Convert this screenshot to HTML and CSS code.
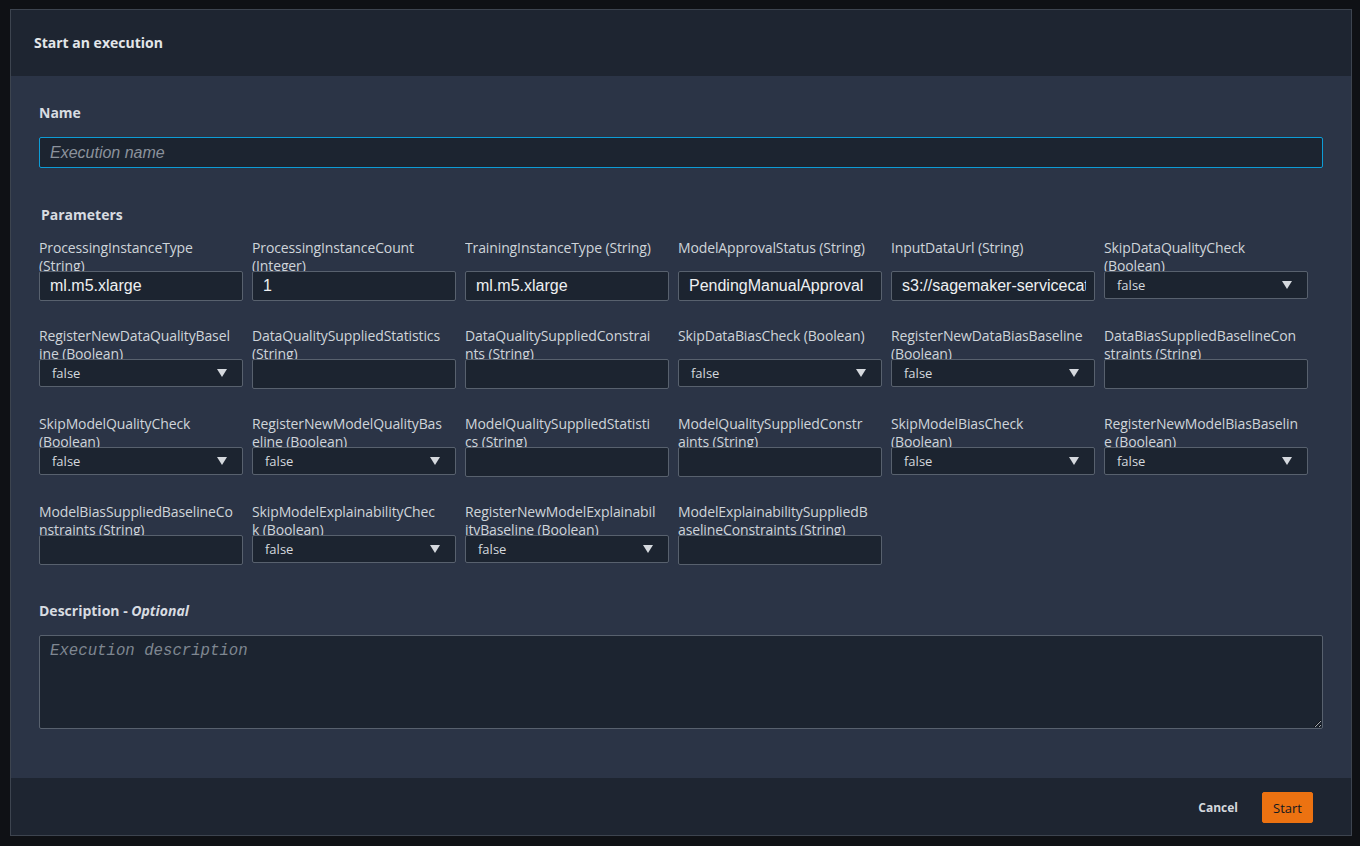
FILE: index.html
```html
<!DOCTYPE html>
<html lang="en">
<head>
<meta charset="utf-8">
<title>Start an execution</title>
<link rel="stylesheet" href="styles.css">
</head>
<body>
<div class="modal">
  <div class="modal-header"><h2 class="modal-title">Start an execution</h2></div>
  <div class="modal-body">
    <div class="section-label">Name</div>
    <input class="name-input" type="text" placeholder="Execution name">
    <div class="section-label params-label">Parameters</div>
    <div class="param-grid">
      <div class="field"><div class="field-label">ProcessingInstanceType<br>(String)</div><input class="text-input" type="text" value="ml.m5.xlarge"></div>
      <div class="field"><div class="field-label">ProcessingInstanceCount<br>(Integer)</div><input class="text-input" type="text" value="1"></div>
      <div class="field"><div class="field-label">TrainingInstanceType (String)</div><input class="text-input" type="text" value="ml.m5.xlarge"></div>
      <div class="field"><div class="field-label">ModelApprovalStatus (String)</div><input class="text-input" type="text" value="PendingManualApproval"></div>
      <div class="field"><div class="field-label">InputDataUrl (String)</div><input class="text-input" type="text" value="s3://sagemaker-servicecatalog-seedcode-us-east-1/abalone/abalone-dataset.csv"></div>
      <div class="field"><div class="field-label">SkipDataQualityCheck<br>(Boolean)</div><div class="select"><span>false</span><svg class="caret" width="10" height="8" viewBox="0 0 10 8"><polygon points="0,0 10,0 5,8"/></svg></div></div>

      <div class="field"><div class="field-label">RegisterNewDataQualityBasel<br>ine (Boolean)</div><div class="select"><span>false</span><svg class="caret" width="10" height="8" viewBox="0 0 10 8"><polygon points="0,0 10,0 5,8"/></svg></div></div>
      <div class="field"><div class="field-label">DataQualitySuppliedStatistics<br>(String)</div><input class="text-input" type="text"></div>
      <div class="field"><div class="field-label">DataQualitySuppliedConstrai<br>nts (String)</div><input class="text-input" type="text"></div>
      <div class="field"><div class="field-label">SkipDataBiasCheck (Boolean)</div><div class="select"><span>false</span><svg class="caret" width="10" height="8" viewBox="0 0 10 8"><polygon points="0,0 10,0 5,8"/></svg></div></div>
      <div class="field"><div class="field-label">RegisterNewDataBiasBaseline<br>(Boolean)</div><div class="select"><span>false</span><svg class="caret" width="10" height="8" viewBox="0 0 10 8"><polygon points="0,0 10,0 5,8"/></svg></div></div>
      <div class="field"><div class="field-label">DataBiasSuppliedBaselineCon<br>straints (String)</div><input class="text-input" type="text"></div>

      <div class="field"><div class="field-label">SkipModelQualityCheck<br>(Boolean)</div><div class="select"><span>false</span><svg class="caret" width="10" height="8" viewBox="0 0 10 8"><polygon points="0,0 10,0 5,8"/></svg></div></div>
      <div class="field"><div class="field-label">RegisterNewModelQualityBas<br>eline (Boolean)</div><div class="select"><span>false</span><svg class="caret" width="10" height="8" viewBox="0 0 10 8"><polygon points="0,0 10,0 5,8"/></svg></div></div>
      <div class="field"><div class="field-label">ModelQualitySuppliedStatisti<br>cs (String)</div><input class="text-input" type="text"></div>
      <div class="field"><div class="field-label">ModelQualitySuppliedConstr<br>aints (String)</div><input class="text-input" type="text"></div>
      <div class="field"><div class="field-label">SkipModelBiasCheck<br>(Boolean)</div><div class="select"><span>false</span><svg class="caret" width="10" height="8" viewBox="0 0 10 8"><polygon points="0,0 10,0 5,8"/></svg></div></div>
      <div class="field"><div class="field-label">RegisterNewModelBiasBaselin<br>e (Boolean)</div><div class="select"><span>false</span><svg class="caret" width="10" height="8" viewBox="0 0 10 8"><polygon points="0,0 10,0 5,8"/></svg></div></div>

      <div class="field"><div class="field-label">ModelBiasSuppliedBaselineCo<br>nstraints (String)</div><input class="text-input" type="text"></div>
      <div class="field"><div class="field-label">SkipModelExplainabilityChec<br>k (Boolean)</div><div class="select"><span>false</span><svg class="caret" width="10" height="8" viewBox="0 0 10 8"><polygon points="0,0 10,0 5,8"/></svg></div></div>
      <div class="field"><div class="field-label">RegisterNewModelExplainabil<br>ityBaseline (Boolean)</div><div class="select"><span>false</span><svg class="caret" width="10" height="8" viewBox="0 0 10 8"><polygon points="0,0 10,0 5,8"/></svg></div></div>
      <div class="field"><div class="field-label">ModelExplainabilitySuppliedB<br>aselineConstraints (String)</div><input class="text-input" type="text"></div>
    </div>
    <div class="section-label desc-label">Description - <i>Optional</i></div>
    <textarea class="desc-input" placeholder="Execution description"></textarea>
  </div>
  <div class="modal-footer">
    <button class="btn-link" type="button">Cancel</button>
    <button class="btn-primary" type="button">Start</button>
  </div>
</div>
</body>
</html>
```

FILE: styles.css
```css
* { box-sizing: border-box; }
html, body { margin: 0; padding: 0; }
body {
  background: #0f1115;
  width: 1360px;
  height: 846px;
  overflow: hidden;
  font-family: "Open Sans", "Noto Sans", sans-serif;
}
.modal {
  margin: 9px 0 0 10px;
  width: 1342px;
  height: 827px;
  border: 1px solid #3d444f;
  display: flex;
  flex-direction: column;
}
.modal-header {
  height: 66px;
  flex: none;
  background: #1e2531;
  display: flex;
  align-items: center;
  padding-left: 23px;
  padding-bottom: 1px;
}
.modal-title {
  margin: 0;
  font-size: 14px;
  font-weight: 700;
  color: #e3e6e9;
}
.modal-body {
  flex: 1;
  background: #2b3446;
  padding: 28px 0 0 28px;
}
.section-label {
  font-size: 14px;
  font-weight: 700;
  line-height: 18px;
  color: #d8dce1;
}
.name-input {
  display: block;
  margin-top: 15px;
  width: 1284px;
  height: 31px;
  background: #1c2430;
  border: 1px solid #0d9cd6;
  border-radius: 2px;
  padding: 0 10px;
  font-family: "Liberation Sans", Arial, sans-serif;
  font-size: 16px;
  color: #eef0f2;
  outline: none;
}
.name-input::placeholder,
.text-input::placeholder {
  color: #8b929c;
  font-style: italic;
}
.params-label {
  margin-top: 38px;
  margin-left: 2px;
}
.param-grid {
  margin-top: 15px;
  display: grid;
  grid-template-columns: repeat(6, 204px);
  column-gap: 9px;
  row-gap: 26px;
  align-items: start;
}
.field {
  display: flex;
  flex-direction: column;
}
.field-label {
  width: 204px;
  height: 32px;
  overflow: hidden;
  white-space: nowrap;
  font-size: 14px;
  line-height: 18px;
  letter-spacing: -0.12px;
  color: #cfd4da;
}
.text-input {
  display: block;
  width: 204px;
  height: 30px;
  background: #1c2430;
  border: 1px solid #58616e;
  border-radius: 2px;
  padding: 0 8px 0 10px;
  font-family: "Liberation Sans", Arial, sans-serif;
  font-size: 16px;
  color: #eef0f2;
  outline: none;
}
.select {
  width: 204px;
  height: 28px;
  background: #1c2430;
  border: 1px solid #58616e;
  border-radius: 2px;
  padding: 0 15px 0 12px;
  display: flex;
  align-items: center;
  justify-content: space-between;
  font-size: 13px;
  color: #d5d9de;
}
.caret { fill: #d5d9de; display: block; }
.desc-label {
  margin-top: 37px;
}
.desc-label i { font-style: italic; }
.desc-input {
  display: block;
  margin-top: 15px;
  width: 1284px;
  height: 94px;
  background: #1c2430;
  border: 1px solid #58616e;
  border-radius: 2px;
  padding: 6px 10px;
  font-family: "Liberation Mono", "Courier New", monospace;
  font-size: 15.7px;
  color: #eef0f2;
  outline: none;
}
.desc-input::placeholder {
  color: #7f8791;
  font-style: italic;
}
.modal-footer {
  height: 57px;
  flex: none;
  background: #1e2531;
  display: flex;
  align-items: center;
  justify-content: flex-end;
  padding-right: 38px;
  gap: 24px;
}
.btn-link {
  background: none;
  border: none;
  padding: 0;
  margin-top: 2px;
  font-family: "Open Sans", "Noto Sans", sans-serif;
  font-size: 12px;
  font-weight: 700;
  color: #d5d9de;
  cursor: pointer;
}
.btn-primary {
  width: 51px;
  height: 31px;
  margin-top: 2px;
  background: #ec7211;
  border: 1px solid #ec7211;
  border-radius: 2px;
  padding: 0;
  font-family: "Open Sans", "Noto Sans", sans-serif;
  font-size: 13px;
  color: #121820;
  cursor: pointer;
}
```
